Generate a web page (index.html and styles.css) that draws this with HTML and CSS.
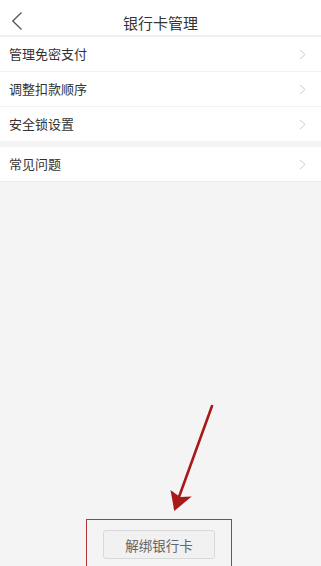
FILE: index.html
```html
<!DOCTYPE html>
<html lang="zh">
<head>
<meta charset="utf-8">
<link rel="stylesheet" href="styles.css">
</head>
<body>
<div class="page">
  <header class="topbar">
    <svg class="back" width="12" height="20" viewBox="0 0 12 20"><path d="M10.5 1.5 L1.8 10 L10.5 18.5" fill="none" stroke="#555" stroke-width="1.3"/></svg>
    <div class="title">银行卡管理</div>
  </header>
  <section class="group">
    <div class="row"><span>管理免密支付</span><svg class="chev" width="7" height="11" viewBox="0 0 7 11"><path d="M1 1 L6 5.5 L1 10" fill="none" stroke="#ccc" stroke-width="1"/></svg></div>
    <div class="row"><span>调整扣款顺序</span><svg class="chev" width="7" height="11" viewBox="0 0 7 11"><path d="M1 1 L6 5.5 L1 10" fill="none" stroke="#ccc" stroke-width="1"/></svg></div>
    <div class="row last"><span>安全锁设置</span><svg class="chev" width="7" height="11" viewBox="0 0 7 11"><path d="M1 1 L6 5.5 L1 10" fill="none" stroke="#ccc" stroke-width="1"/></svg></div>
  </section>
  <section class="group second">
    <div class="row last"><span>常见问题</span><svg class="chev" width="7" height="11" viewBox="0 0 7 11"><path d="M1 1 L6 5.5 L1 10" fill="none" stroke="#ccc" stroke-width="1"/></svg></div>
  </section>
  <div class="spacer"></div>
  <footer class="footer">
    <button class="unbind">解绑银行卡</button>
  </footer>
  <div class="mark-box"></div>
  <svg class="mark-arrow" width="321" height="566" viewBox="0 0 321 566">
    <path d="M212 406 L175 508" fill="none" stroke="#a8191a" stroke-width="2.6" stroke-linecap="round"/>
    <path d="M170.5 490 L174.3 511 L191.7 496.5 L180 497 Z" fill="#a8191a"/>
  </svg>
</div>
</body>
</html>
```
FILE: styles.css
```css
html, body {
  margin: 0;
  padding: 0;
}
body {
  font-family: "Noto Sans CJK SC", "Noto Sans", sans-serif;
  background: #f4f4f4;
}
.page {
  position: relative;
  width: 321px;
  height: 566px;
  display: flex;
  flex-direction: column;
  overflow: hidden;
  background: #f4f4f4;
}
.topbar {
  height: 35px;
  background: #fff;
  border-bottom: 2px solid #efefef;
  display: flex;
  align-items: center;
  justify-content: center;
  position: relative;
}
.back {
  position: absolute;
  left: 11px;
  top: 11px;
}
.title {
  font-size: 15px;
  color: #333;
  padding-top: 9px;
}
.group {
  background: #fff;
}
.second {
  margin-top: 6px;
  border-bottom: 1px solid #ececec;
}
.row {
  height: 34px;
  border-bottom: 1px solid #f2f2f2;
  display: flex;
  align-items: center;
  justify-content: space-between;
  padding: 0 15px 0 9px;
  font-size: 13px;
  color: #333;
}
.row span {
  margin-top: -1px;
}
.row.last {
  border-bottom: none;
}
.spacer {
  flex: 1;
}
.footer {
  display: flex;
  justify-content: center;
  padding: 0 3px 7px 0;
}
.unbind {
  width: 112px;
  height: 29px;
  background: #f1f1f1;
  border: 1px solid #d9d9d9;
  border-radius: 3px;
  font-family: "Noto Sans CJK SC", sans-serif;
  font-size: 13.5px;
  color: #666;
  padding: 0;
}
.mark-box {
  position: absolute;
  left: 86px;
  top: 519px;
  width: 144px;
  height: 60px;
  border: 1.5px solid #b03a36;
}
.mark-arrow {
  position: absolute;
  left: 0;
  top: 0;
  pointer-events: none;
}
```
